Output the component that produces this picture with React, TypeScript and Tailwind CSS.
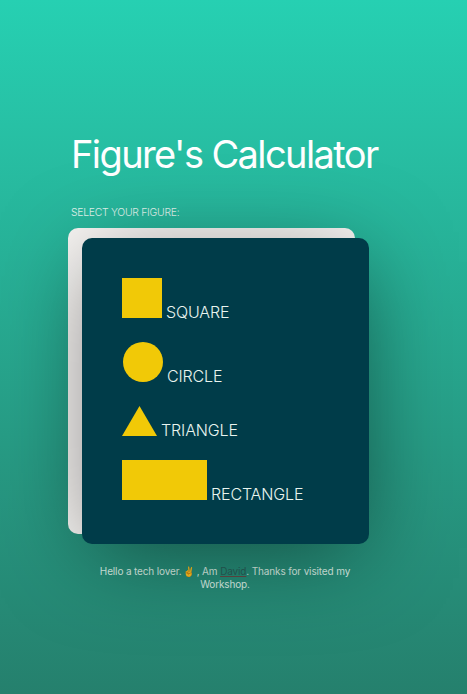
export default function App() {
  return (
    <main className="h-[694px] w-[467px] overflow-hidden bg-linear-to-b from-[#26d0b2] to-[#25806d] pt-[130px] font-['Inter',sans-serif] font-light text-white">
      <h1 className="ml-[71px] whitespace-nowrap text-[38px] leading-[48px] tracking-[-1.6px] font-[380]">Figure's Calculator</h1>
      <p className="ml-[71px] mt-[28px] text-[10.4px] leading-[13px] tracking-[-0.27px] text-[#e0f4ed]">SELECT YOUR FIGURE:</p>
      <section className="relative ml-[82px] mt-[19px] h-[306px] w-[287px]">
        <div className="absolute -left-[14px] -top-[10px] h-[306px] w-[287px] rounded-[10px] bg-[#f8f6f4]" />
        <div className="relative h-[306px] rounded-[10px] bg-[#003c49] pl-[40px] pt-[40px] text-[16px] leading-5 tracking-[-0.13px] text-[#e9f4ef] shadow-[0_14px_90px_-10px_rgba(0,0,0,0.5)]">
          <div className="flex h-[40px] items-end gap-1"><i className="h-10 w-10 bg-[#f1c907]" /><span className="-mb-1">SQUARE</span></div>
          <div className="mt-6 flex h-[40px] items-end gap-1"><i className="ml-px h-10 w-10 rounded-full bg-[#f1c907]" /><span className="-mb-1">CIRCLE</span></div>
          <div className="mt-6 flex h-[30px] items-end gap-1"><i className="h-[30px] w-[35px] bg-[#f1c907] [clip-path:polygon(50%_0,100%_100%,0_100%)]" /><span className="-mb-1">TRIANGLE</span></div>
          <div className="mt-6 flex h-[40px] items-end gap-1"><i className="h-10 w-[85px] bg-[#f1c907]" /><span className="-mb-1">RECTANGLE</span></div>
        </div>
      </section>
      <footer className="ml-[95px] mt-[21px] w-[260px] text-center text-[10px] leading-[13px] tracking-[-0.14px] font-[370] text-[#d9eee4]">Hello a tech lover. <span className="-mx-px text-[9.5px] leading-none">✌</span> , Am <span className="text-[#285f58] underline decoration-[#654b47] decoration-1 underline-offset-1 [text-decoration-skip-ink:none]">David</span>. Thanks for visited my Workshop.</footer>
    </main>
  );
}
